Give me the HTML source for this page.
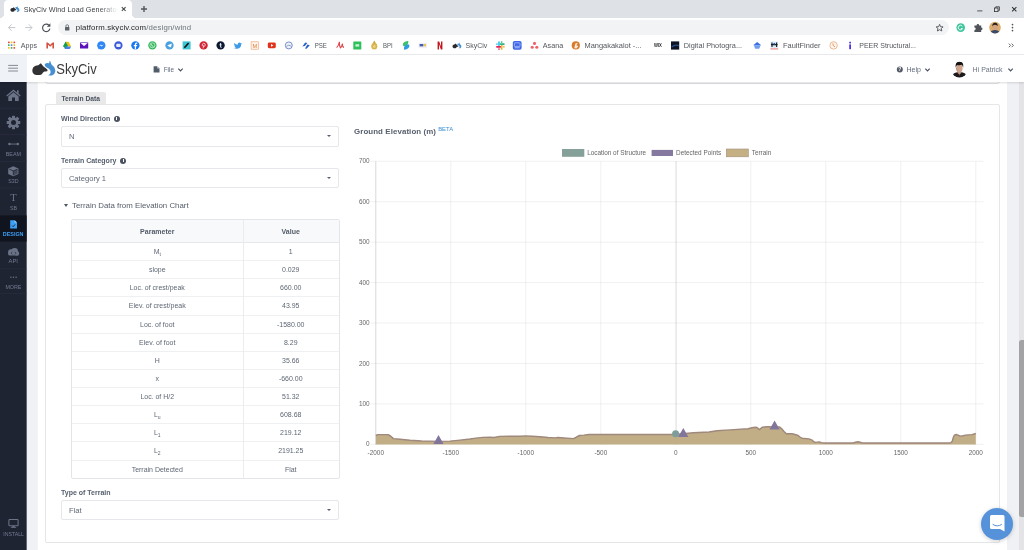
<!DOCTYPE html>
<html><head><meta charset="utf-8">
<style>
*{box-sizing:border-box;margin:0;padding:0}
html,body{width:1024px;height:550px;overflow:hidden;background:#fff;font-family:"Liberation Sans",sans-serif;}
.abs{position:absolute}
#root{will-change:transform;position:relative;width:1024px;height:550px;overflow:hidden;background:#eff1f4}
/* browser chrome */
#tabbar{left:0;top:0;width:1024px;height:17.6px;background:#dee1e6}
#tab{left:4.2px;top:0;width:127.8px;height:17.6px;background:#fff;border-radius:4.2px 4.2px 0 0}#tab:before,#tab:after{content:"";position:absolute;bottom:0;width:4px;height:4px}#tab:before{left:-4px;background:radial-gradient(circle at 0 0,#dee1e6 3.8px,#fff 4.2px)}#tab:after{right:-4px;background:radial-gradient(circle at 100% 0,#dee1e6 3.8px,#fff 4.2px)}
#toolbar{left:0;top:17.6px;width:1024px;height:19.4px;background:#fff}
#url{left:58px;top:20px;width:890.5px;height:15px;background:#f1f3f4;border-radius:8px}
#bm{left:0;top:37px;width:1024px;height:18px;background:#fff;border-bottom:1px solid #e9ebee}
.t{position:absolute;white-space:nowrap;line-height:1}
/* app */
#hdr{left:0;top:55px;width:1024px;height:27px;background:#fff;box-shadow:0 0.5px 2px rgba(0,0,0,.14)}
#ham{left:0;top:55px;width:26.6px;height:27px;background:#eff2f7}
#side{left:0;top:82px;width:26px;box-shadow:1px 0 0 #646873;height:468px;background:#1f2433}

#card{left:38px;top:78px;width:969px;height:480px;background:#fff;box-shadow:-0.4px 0 0 #f9f9fb}
#panel{left:45px;top:104px;width:955px;height:438.6px;background:#fff;border:1px solid #e5e6e8;border-radius:2px}
#ptab{left:56px;top:92px;width:49.5px;height:13px;background:#e9e9e9;border-radius:2px 2px 0 0}
.lbl{font-size:7px;font-weight:bold;color:#57606e}
.sel{position:absolute;left:61px;width:277.6px;height:20px;border:1px solid #e5e7ea;border-radius:2px;background:#fff}
.sel span{position:absolute;left:6.9px;top:6px;font-size:7.6px;line-height:1;color:#5f6775}
.sel i{position:absolute;right:6.6px;top:8.2px;width:0;height:0;border-left:2.2px solid transparent;border-right:2.2px solid transparent;border-top:2.6px solid #566070}
.info{display:inline-block;position:relative;width:6px;height:6px;border-radius:50%;background:#4b5260;vertical-align:-1.1px;margin-left:3.6px}.info:before{content:"";position:absolute;left:2.5px;top:2.6px;width:1px;height:2.2px;background:#fff}.info:after{content:"";position:absolute;left:2.5px;top:1.1px;width:1px;height:0.9px;background:#fff}
#tbl{left:71px;top:219px;width:268.5px;height:260px;border:1px solid #e3e5e8;border-radius:2px;background:#fff;overflow:hidden}
#thead{left:0;top:0;width:268px;height:23px;background:#f8f9fa;border-bottom:1px solid #e6e8ea}
.r{position:absolute;left:0;width:268px;border-bottom:1px solid #eef0f2}
.c1{position:absolute;left:0;width:170.5px;text-align:center;font-size:6.97px;color:#5f6774;line-height:1;top:5.5px}
.c2{position:absolute;left:170.5px;width:96.5px;text-align:center;font-size:6.97px;color:#5f6774;line-height:1;top:5.5px}
#vdiv{left:170.5px;top:0;width:1px;height:260px;background:#eaecee}
sub{font-size:5px;vertical-align:-1.5px;line-height:0}
</style></head><body>
<div id="root">
<div id="tabbar" class="abs"></div>
<div id="tab" class="abs"></div>
<div id="toolbar" class="abs"></div>
<div id="url" class="abs"></div>
<div id="bm" class="abs"></div>
<svg class="abs" style="left:0;top:0" width="1024" height="56" viewBox="0 0 1024 56" font-family="Liberation Sans, sans-serif">
<g transform="translate(10.40,3.90) scale(0.390) translate(-32.3,0)"><path d="M32.3 15 Q32.6 12 35 11 Q36.6 10.2 38.2 10.2 L40.9 8.3 L42.2 10 Q43.6 11.8 45.6 13 L47.7 15.1 L47.1 16.2 Q45.4 16.5 44.4 16.6 Q42.8 17.4 42.2 18.8 Q41.2 19.9 39.6 20.1 H36 Q33.6 19.8 32.8 17.8 Q32.3 16.5 32.3 15 Z" fill="#2a2a2c"/><path d="M44.7 9.2 Q46.4 7.6 49 8.2 Q49.7 7.4 49.6 5.6 Q50.8 6.8 51 8.4 Q51.6 9.8 53.4 11.2 Q55.4 13.2 55.4 16 Q55 19 52.4 20.2 Q50.2 20.9 48.2 20.2 Q50.6 19.2 50.7 17 Q50.6 14.8 48.6 13.4 Q46.4 12.4 45.4 11.4 Q44.6 10.4 44.7 9.2 Z" fill="#3f8fd6"/></g>
<path d="M121.8 7.1 L125.6 10.9 M125.6 7.1 L121.8 10.9" stroke="#44474b" stroke-width="1.05"/><path d="M141 9 H147 M144 6 V12" stroke="#54585d" stroke-width="1.4"/>
<path d="M977.2 10.9 H982.4" stroke="#333" stroke-width="0.8"/><rect x="994.4" y="8" width="3.6" height="3.6" fill="none" stroke="#333" stroke-width="0.8"/><path d="M995.8 8 V6.8 H999.4 V10.4 H998.2" fill="none" stroke="#333" stroke-width="0.8"/><path d="M1012.1 7.1 L1016.4 11.4 M1016.4 7.1 L1012.1 11.4" stroke="#333" stroke-width="1.05"/>
<g fill="none" stroke="#c0c3c7" stroke-width="0.95"><path d="M15.3 27.6 H8.6 M11.7 24.4 L8.5 27.6 L11.7 30.8"/><path d="M25.2 27.6 H31.9 M28.8 24.4 L32 27.6 L28.8 30.8"/></g><path d="M49 25.3 A3.7 3.7 0 1 0 49.9 28.7" fill="none" stroke="#4c5056" stroke-width="1.15"/><path d="M50.4 23.2 V26.8 H46.8 Z" fill="#4c5056"/>
<rect x="65" y="27" width="4.4" height="3.6" rx="0.5" fill="#5f6368"/><path d="M65.9 27.2 V26 A1.3 1.3 0 0 1 68.5 26 V27.2" fill="none" stroke="#5f6368" stroke-width="0.8"/>
<path d="M939.6 24.4 L940.6 26.7 L943.1 26.9 L941.2 28.5 L941.8 31 L939.6 29.7 L937.4 31 L938 28.5 L936.1 26.9 L938.6 26.7 Z" fill="none" stroke="#55595e" stroke-width="0.95" stroke-linejoin="round"/>
<circle cx="960.7" cy="27.6" r="4.3" fill="#3fc59c"/><path d="M962.3 26.2 A2.3 2.3 0 1 0 962.6 28.6 H960.8" fill="none" stroke="#fff" stroke-width="0.9"/><path d="M974.4 25.4 H976.6 A1.3 1.3 0 0 1 979.2 25.4 H981.2 V27.4 A1.3 1.3 0 0 1 981.2 30 V32 H974.4 V30 A1.25 1.25 0 0 0 974.4 27.4 Z" fill="#50545a"/><clipPath id="av2"><circle cx="995" cy="27.6" r="5.8"/></clipPath><g clip-path="url(#av2)"><rect x="989" y="21" width="12" height="13" fill="#d9ad6c"/><ellipse cx="995" cy="33.5" rx="5" ry="3.4" fill="#3a4a68"/><ellipse cx="995" cy="27" rx="2.5" ry="3" fill="#d6a283"/><path d="M992.3 26.4 Q992.2 22.8 995.2 22.8 Q997.9 23 997.7 26.3 Q997 24.6 995 24.7 Q993 24.6 992.3 26.4 Z" fill="#231d1c"/></g><g fill="#50545a"><circle cx="1012.5" cy="24.6" r="0.85"/><circle cx="1012.5" cy="27.6" r="0.85"/><circle cx="1012.5" cy="30.6" r="0.85"/></g>
<rect x="8.00" y="41.60" width="1.6" height="1.6" fill="#ea4335"/><rect x="10.75" y="41.60" width="1.6" height="1.6" fill="#fbbc05"/><rect x="13.50" y="41.60" width="1.6" height="1.6" fill="#ea4335"/><rect x="8.00" y="44.35" width="1.6" height="1.6" fill="#34a853"/><rect x="10.75" y="44.35" width="1.6" height="1.6" fill="#4285f4"/><rect x="13.50" y="44.35" width="1.6" height="1.6" fill="#fbbc05"/><rect x="8.00" y="47.10" width="1.6" height="1.6" fill="#fbbc05"/><rect x="10.75" y="47.10" width="1.6" height="1.6" fill="#34a853"/><rect x="13.50" y="47.10" width="1.6" height="1.6" fill="#ea4335"/>
<path d="M46.4 42.6 H47.8 L50.2 44.8 L52.6 42.6 H54 V48.4 H52.4 V44.8 L50.2 46.8 L48 44.8 V48.4 H46.4 Z" fill="#d5503f"/><path d="M65.6 41.8 H68.6 L71.2 46.4 H68.2 Z" fill="#f4c20d"/><path d="M65.6 41.8 L68.1 46.3 L65.5 49 L63 46.4 Z" fill="#1a9c55" transform="translate(0,-0.2)"/><path d="M64.4 49 L65.9 46.4 H71.2 L69.7 49 Z" fill="#4a7fe3"/><rect x="80" y="42.2" width="8.2" height="6.3" rx="0.6" fill="#5b0fbf"/><path d="M80.4 42.8 L84.1 46 L87.8 42.8" fill="#fff" stroke="#fff" stroke-width="0.3"/><circle cx="101.30" cy="45.40" r="4.15" fill="#2e86f6"/><path d="M99 46.6 L100.8 44.6 L101.8 45.6 L103.6 44.4 L101.8 46.4 L100.8 45.4 Z" fill="#fff"/><path d="M98.6 47.4 L98.4 49.3 L100.4 48.6 Z" fill="#2e86f6"/><circle cx="118.40" cy="45.40" r="4.15" fill="#3a5ad8"/><rect x="116.2" y="43.8" width="4.4" height="3.2" rx="0.9" fill="#e8ecff"/><circle cx="135.40" cy="45.40" r="4.15" fill="#1877f2"/><path d="M136 49.2 V46.2 H137 L137.2 45 H136 V44.3 Q136 43.7 136.7 43.7 H137.3 V42.7 Q135 42.2 134.8 44.2 V45 H133.8 V46.2 H134.8 V49.2 Z" fill="#fff"/><circle cx="152.40" cy="45.40" r="4.15" fill="#35b85c"/><circle cx="152.4" cy="45.3" r="2.5" fill="none" stroke="#fff" stroke-width="0.6"/><path d="M151.3 44.2 Q151.4 46 153.4 46.5" stroke="#fff" stroke-width="0.8" fill="none"/><circle cx="169.50" cy="45.40" r="4.15" fill="#4aa0e0"/><path d="M167.2 45.4 L171.8 43.5 L171 47.6 L169.6 46.6 L168.9 47.4 L168.8 46.2 Z" fill="#fff"/><rect x="182.6" y="41.4" width="8" height="8" fill="#3fc4d4"/><path d="M184.4 47.8 L188.6 43" stroke="#111" stroke-width="1.6"/><circle cx="203.60" cy="45.40" r="4.15" fill="#d32232"/><path d="M203 48.4 L203.8 45.2 M202.3 46.2 Q201.6 43.4 203.8 43.2 Q205.8 43.4 205.2 45.4 Q204.6 46.8 203.6 46.2" stroke="#fff" stroke-width="0.7" fill="none"/><circle cx="220.60" cy="45.40" r="4.15" fill="#0e1a33"/><path d="M220.2 43 V44.4 H219.4 V45.2 H220.2 V47 Q220.3 48 221.6 47.8 V47 Q221.1 47 221.1 46.6 V45.2 H221.7 V44.4 H221.1 V43 Z" fill="#fff"/><path d="M234 43 Q235.6 44.8 237.6 44.8 Q237.4 42.8 239.4 42.6 Q240.2 42.6 240.7 43.2 L241.7 42.9 L241.2 43.8 L241.9 43.7 L241.1 44.6 Q241.2 47.6 238.2 48.6 Q235.8 49.2 233.7 48 Q235.2 48 236 47.2 Q234.8 47 234.5 46 H235.1 Q233.9 45.4 234 44.3 Q234.3 44.5 234.6 44.4 Q233.6 43.8 234 43 Z" fill="#3b9be8"/><rect x="251.1" y="41.8" width="7.4" height="7.4" fill="#fff4ea" stroke="#e8a070" stroke-width="0.6"/><text x="254.8" y="47.8" font-size="5.6" fill="#e07b39" text-anchor="middle">M</text><rect x="267.8" y="42.6" width="8" height="5.6" rx="1.4" fill="#e0321c"/><path d="M271 44 L273.4 45.4 L271 46.8 Z" fill="#fff"/><circle cx="288.8" cy="45.4" r="3.5" fill="#eef2fb" stroke="#4766b0" stroke-width="0.7"/><path d="M286.4 46.4 Q288.6 44 291.4 46.2" stroke="#4766b0" stroke-width="0.6" fill="none"/><path d="M302.4 46.6 L305.2 42.4 L307.4 43 L304.8 46 Z M305 48.6 L307.4 44.6 L309.8 45.2 L306.6 48.8 Z" fill="#2a62c9"/><path d="M336.6 47.6 Q339 45.4 339.4 41.8 Q339.2 46.4 340.6 48 Q342 46.4 342.4 43.6 Q342.2 47 344 47.4" stroke="#e0444a" stroke-width="1.1" fill="none"/><rect x="353.3" y="41.5" width="8" height="8" rx="0.6" fill="#2ec05a"/><rect x="355.4" y="44.2" width="3.8" height="2.4" fill="#c9f2d6"/><ellipse cx="374.3" cy="46.2" rx="3" ry="3.3" fill="#d8b54a"/><path d="M372.6 43.6 L374.3 40.6 L376 43.6 Z" fill="#c9a53c"/><ellipse cx="374.3" cy="46.4" rx="1.2" ry="1.6" fill="#e9d28a"/><path d="M408.2 40.8 Q402.6 41.8 402.8 45.2 Q403.8 47 406 45.8 Q408.8 44.2 408.2 40.8 Z" fill="#3cc26a"/><path d="M404 49.8 Q409.8 48.8 409.4 45.2 Q408.4 43.6 406.2 44.8 Q403.4 46.4 404 49.8 Z" fill="#2f9be0"/><rect x="418.6" y="42.6" width="8.4" height="5.6" fill="#eef0f8"/><rect x="419.6" y="44" width="3.8" height="2.4" fill="#4a59b8"/><rect x="423.6" y="44" width="2.4" height="2.4" fill="#e8c84a"/><path d="M437.6 41.4 H439.2 L441 46.6 V41.4 H442.4 V49.4 H440.9 L439 44.2 V49.4 H437.6 Z" fill="#c4171d"/><g transform="translate(452.50,40.40) scale(0.385) translate(-32.3,0)"><path d="M32.3 15 Q32.6 12 35 11 Q36.6 10.2 38.2 10.2 L40.9 8.3 L42.2 10 Q43.6 11.8 45.6 13 L47.7 15.1 L47.1 16.2 Q45.4 16.5 44.4 16.6 Q42.8 17.4 42.2 18.8 Q41.2 19.9 39.6 20.1 H36 Q33.6 19.8 32.8 17.8 Q32.3 16.5 32.3 15 Z" fill="#2a2a2c"/><path d="M44.7 9.2 Q46.4 7.6 49 8.2 Q49.7 7.4 49.6 5.6 Q50.8 6.8 51 8.4 Q51.6 9.8 53.4 11.2 Q55.4 13.2 55.4 16 Q55 19 52.4 20.2 Q50.2 20.9 48.2 20.2 Q50.6 19.2 50.7 17 Q50.6 14.8 48.6 13.4 Q46.4 12.4 45.4 11.4 Q44.6 10.4 44.7 9.2 Z" fill="#3f8fd6"/></g><g stroke-width="1.7" stroke-linecap="round"><path d="M499 42 V45.3" stroke="#36c5f0"/><path d="M501.7 45.7 V49" stroke="#ecb22e"/><path d="M496.9 46.8 H500.2" stroke="#e01e5a"/><path d="M500.6 44.1 H503.9" stroke="#2eb67d"/><path d="M496.9 44.1 h0.01" stroke="#36c5f0"/><path d="M503.9 46.8 h0.01" stroke="#ecb22e"/><path d="M499 49 h0.01" stroke="#e01e5a"/><path d="M501.7 42 h0.01" stroke="#2eb67d"/></g><rect x="512.8" y="41" width="8.8" height="8.8" rx="1.8" fill="#3f66e6"/><rect x="514.4" y="42.8" width="5.6" height="3.6" rx="0.6" fill="none" stroke="#b9ccff" stroke-width="0.7"/><rect x="514.6" y="47.4" width="5.2" height="0.8" fill="#b9ccff"/><circle cx="534.5" cy="43.4" r="1.55" fill="#f0626a"/><circle cx="532.2" cy="47.2" r="1.55" fill="#f0626a"/><circle cx="536.8" cy="47.2" r="1.55" fill="#f0626a"/><circle cx="575.80" cy="45.40" r="4.10" fill="#d97b2b"/><path d="M574.2 48.2 L575.4 43.6 L577.8 42.8 L576.4 45.4 L578.4 46 L576.6 48.4 Z" fill="#fff" opacity="0.85"/><text x="654" y="46.9" font-size="4.8" font-weight="bold" fill="#2a2a2a" textLength="7.9" lengthAdjust="spacingAndGlyphs">WIX</text><rect x="671" y="41.4" width="8.2" height="8.2" fill="#0d1424"/><path d="M671.6 47 Q675 44.4 678.8 45.6" stroke="#2b4f8a" stroke-width="1.2" fill="none"/><path d="M757.2 42 L761.2 45.3 H753.2 Z" fill="#3b6fe0"/><path d="M753.8 45.3 H760.6 L759.2 48.7 H755.2 Z" fill="#6f9df0"/><rect x="770.6" y="41.6" width="7.4" height="6.2" fill="#d9e6f7"/><path d="M772 42.4 V47 M776.6 42.4 V47 M771 44.6 H777.6" stroke="#1a1a1a" stroke-width="1.1"/><rect x="773.4" y="43" width="1.8" height="1.4" fill="#2b6fd6"/><rect x="770.4" y="48.6" width="7.8" height="0.7" fill="#d33"/><circle cx="833.6" cy="45.4" r="3.7" fill="#fff6ef" stroke="#eaa77a" stroke-width="0.8"/><path d="M832.8 43.4 L833.4 45.8 L835 47" stroke="#e58a4f" stroke-width="0.9" fill="none"/><rect x="849.3" y="44.4" width="1.6" height="4.8" fill="#3a1fe0"/><rect x="849.3" y="41.8" width="1.6" height="1.6" fill="#3a1fe0"/><g font-size="7.2" fill="#53575c"><text x="20.70" y="48" textLength="16.30" lengthAdjust="spacingAndGlyphs">Apps</text><text x="314.70" y="48" textLength="12.20" lengthAdjust="spacingAndGlyphs">PSE</text><text x="383.10" y="48" textLength="9.70" lengthAdjust="spacingAndGlyphs">BPI</text><text x="465.50" y="48" textLength="21.75" lengthAdjust="spacingAndGlyphs">SkyCiv</text><text x="542.75" y="48" textLength="20.50" lengthAdjust="spacingAndGlyphs">Asana</text><text x="584.50" y="48" textLength="57.00" lengthAdjust="spacingAndGlyphs">Mangakakalot -...</text><text x="683.75" y="48" textLength="58.25" lengthAdjust="spacingAndGlyphs">Digital Photogra...</text><text x="783.00" y="48" textLength="37.50" lengthAdjust="spacingAndGlyphs">FaultFinder</text><text x="859.25" y="48" textLength="56.75" lengthAdjust="spacingAndGlyphs">PEER Structural...</text></g>
<path d="M1008.8 43.6 L1010.6 45.4 L1008.8 47.2 M1011.6 43.6 L1013.4 45.4 L1011.6 47.2" stroke="#50545a" stroke-width="0.85" fill="none"/>
</svg>
<div class="t" style="left:23.8px;top:5.9px;font-size:7.2px;color:#3c4043;width:94px;overflow:hidden;letter-spacing:0.08px;-webkit-mask-image:linear-gradient(90deg,#000 80%,transparent 100%)">SkyCiv Wind Load Generator</div>
<div class="t" style="left:75.7px;top:23.9px;font-size:7.8px;letter-spacing:0.14px;color:#26282b">platform.skyciv.com<span style="color:#70757a">/design/wind</span></div>


<div id="side" class="abs"></div>
<svg class="abs" style="left:0;top:82px" width="27" height="468" viewBox="0 0 27 468" font-family="Liberation Sans, sans-serif">
<g stroke="#2b3142" stroke-width="0.6"><path d="M0 26.3H26.6M0 52.7H26.6M0 79.5H26.6M0 106H26.6M0 186.8H26.6M0 211.6H26.6"/></g>
<rect x="0" y="133.4" width="26.6" height="26.2" fill="#10141f"/>
<!-- home -->
<g fill="#6b7386"><path d="M13.5 7.6 L6.3 13.6 L7.1 14.5 L13.5 9.3 L19.9 14.5 L20.7 13.6 L18.6 11.8 V8.3 H17 V10.5 Z"/><path d="M13.5 10.3 L8.3 14.6 V19 H12 V15.6 H15 V19 H18.7 V14.6 Z"/></g>
<!-- gear -->
<g transform="translate(13.5,40.5)" fill="#6b7386"><circle r="4.9"/><g><rect x="-1.5" y="-6.8" width="3" height="13.6" rx="0.6"/><rect x="-1.5" y="-6.8" width="3" height="13.6" rx="0.6" transform="rotate(45)"/><rect x="-1.5" y="-6.8" width="3" height="13.6" rx="0.6" transform="rotate(90)"/><rect x="-1.5" y="-6.8" width="3" height="13.6" rx="0.6" transform="rotate(135)"/></g><circle r="2.5" fill="#1f2433"/></g>
<!-- beam -->
<g fill="#6b7386"><rect x="9" y="61.6" width="9.4" height="0.9"/><circle cx="9.4" cy="62" r="1.2"/><circle cx="17.8" cy="62" r="1.2"/></g>
<!-- cube -->
<g><path d="M13.3 84.2 L18.4 86.4 V92 L13.3 94.3 L8.2 92 V86.4 Z" fill="#6b7386"/><path d="M9.3 87.2 L13.3 88.9 L17.3 87.2 M13.3 88.9 V93.2" stroke="#1f2433" stroke-width="0.8" fill="none"/><path d="M13.3 88.9 L17.6 87.1 V91.6 L13.3 93.5 Z" fill="#1f2433" opacity="0.55"/></g>
<!-- T -->
<text x="13.5" y="119.3" font-family="Liberation Serif, serif" font-size="10.5" fill="#6b7386" text-anchor="middle">T</text>
<!-- design doc -->
<g><path d="M10.2 138.2 H14.6 L17 140.6 V146.6 H10.2 Z" fill="#3b9ff5"/><path d="M14.6 138.2 V140.6 H17 Z" fill="#9fd0fb"/><path d="M12 143.6 L13.1 144.7 L15.1 142.4" stroke="#10141f" stroke-width="0.8" fill="none"/></g>
<!-- cloud api -->
<g fill="#6b7386"><circle cx="11" cy="170.2" r="2.9"/><circle cx="14.6" cy="169.2" r="3.3"/><circle cx="16.8" cy="171.2" r="2.3"/><rect x="8.2" y="170.2" width="10.8" height="3.3" rx="1.6"/><path d="M12.3 170 l-1.2 1.2 l1.2 1.2 M14.9 170 l1.2 1.2 l-1.2 1.2" stroke="#1f2433" stroke-width="0.7" fill="none"/></g>
<!-- dots -->
<g fill="#6b7386"><circle cx="10.9" cy="195.3" r="0.75"/><circle cx="13.5" cy="195.3" r="0.75"/><circle cx="16.1" cy="195.3" r="0.75"/></g>
<!-- monitor -->
<g><rect x="8.9" y="437.5" width="9.2" height="6.2" rx="0.8" fill="none" stroke="#6b7386" stroke-width="1.05"/><rect x="12.3" y="444" width="2.4" height="1.3" fill="#6b7386"/><rect x="10.9" y="445.1" width="5.2" height="0.8" fill="#6b7386"/></g>
<g font-size="5.8" fill="#737b90"><text x="5.80" y="74.30" textLength="15.20" lengthAdjust="spacingAndGlyphs">BEAM</text><text x="8.20" y="100.60" textLength="10.30" lengthAdjust="spacingAndGlyphs">S3D</text><text x="10.00" y="127.50" textLength="7.00" lengthAdjust="spacingAndGlyphs">SB</text><text x="2.80" y="154.00" textLength="20.70" lengthAdjust="spacingAndGlyphs" fill="#3b9ff5" font-weight="bold">DESIGN</text><text x="8.60" y="181.00" textLength="9.40" lengthAdjust="spacingAndGlyphs">API</text><text x="5.40" y="207.40" textLength="16.00" lengthAdjust="spacingAndGlyphs">MORE</text><text x="3.20" y="453.90" textLength="20.80" lengthAdjust="spacingAndGlyphs">INSTALL</text></g>
</svg>

<div id="card" class="abs"></div>
<div class="abs" style="left:45px;top:60px;width:955px;height:23.6px;border:1px solid #e0e1e4;border-radius:0 0 3px 3px;background:#fff"></div>
<div id="ptab" class="abs"></div><div id="panel" class="abs"></div>
<div class="t" style="left:61.4px;top:95.8px;font-size:6.7px;font-weight:bold;color:#4a525f">Terrain Data</div>
<div class="t lbl" style="left:61px;top:114.6px">Wind Direction<span class="info"></span></div>
<div class="sel" style="top:126px;height:20.6px"><span>N</span><i></i></div>
<div class="t lbl" style="left:61px;top:156.6px">Terrain Category<span class="info"></span></div>
<div class="sel" style="top:168px"><span>Category 1</span><i></i></div>
<div class="abs" style="left:63.5px;top:204px;width:0;height:0;border-left:2.2px solid transparent;border-right:2.2px solid transparent;border-top:3px solid #4b5563"></div>
<div class="t" style="left:72px;top:201.5px;font-size:7.86px;color:#555c68">Terrain Data from Elevation Chart</div>
<div id="tbl" class="abs"><div id="thead" class="abs"></div><div class="c1" style="top:8px;font-size:7.03px;font-weight:bold;color:#535b69">Parameter</div><div class="c2" style="top:8px;font-size:7.03px;font-weight:bold;color:#535b69">Value</div><div class="r" style="top:23px;height:18px"><div class="c1">M<sub>t</sub></div><div class="c2">1</div></div><div class="r" style="top:41px;height:18px"><div class="c1">slope</div><div class="c2">0.029</div></div><div class="r" style="top:59px;height:18px"><div class="c1">Loc. of crest/peak</div><div class="c2">660.00</div></div><div class="r" style="top:77px;height:19px"><div class="c1">Elev. of crest/peak</div><div class="c2">43.95</div></div><div class="r" style="top:96px;height:18px"><div class="c1">Loc. of foot</div><div class="c2">-1580.00</div></div><div class="r" style="top:114px;height:18px"><div class="c1">Elev. of foot</div><div class="c2">8.29</div></div><div class="r" style="top:132px;height:18px"><div class="c1">H</div><div class="c2">35.66</div></div><div class="r" style="top:150px;height:18px"><div class="c1">x</div><div class="c2">-660.00</div></div><div class="r" style="top:168px;height:18px"><div class="c1">Loc. of H/2</div><div class="c2">51.32</div></div><div class="r" style="top:186px;height:18px"><div class="c1">L<sub>u</sub></div><div class="c2">608.68</div></div><div class="r" style="top:204px;height:18px"><div class="c1">L<sub>1</sub></div><div class="c2">219.12</div></div><div class="r" style="top:222px;height:19px"><div class="c1">L<sub>2</sub></div><div class="c2">2191.25</div></div><div class="r" style="top:241px;height:18px"><div class="c1">Terrain Detected</div><div class="c2">Flat</div></div><div id="vdiv" class="abs"></div></div>
<div class="t lbl" style="left:61px;top:488.5px">Type of Terrain</div>
<div class="sel" style="top:500px"><span>Flat</span><i></i></div>
<div class="abs" style="left:1019px;top:82px;width:5px;height:468px;background:#e4e4e6"></div>
<div class="abs" style="left:1019px;top:340px;width:5px;height:177px;background:#a3a3a5;border-radius:2.5px 0 0 2.5px"></div>
<div class="abs" style="left:981px;top:507.5px;width:32px;height:32px;border-radius:50%;background:#5592da;box-shadow:0 1px 4px rgba(0,0,0,.2)"></div>
<svg class="abs" style="left:989px;top:514px" width="17" height="19" viewBox="0 0 17 19"><path d="M2.5 1 H14 Q15.5 1 15.5 2.5 V17.5 L11 15 H2.5 Q1 15 1 13.5 V2.5 Q1 1 2.5 1 Z" fill="#fff"/><path d="M4 10.5 Q8.2 13.5 12.5 10.5" stroke="#5592da" stroke-width="1" fill="none" stroke-linecap="round"/></svg>
<svg class="abs" style="left:0;top:0" width="1024" height="550" viewBox="0 0 1024 550" font-family="Liberation Sans, sans-serif">
<path d="M370.6 444.30 H983.5" stroke="#000" stroke-opacity="0.11" stroke-width="0.55"/><path d="M370.6 403.87 H983.5" stroke="#000" stroke-opacity="0.11" stroke-width="0.55"/><path d="M370.6 363.44 H983.5" stroke="#000" stroke-opacity="0.11" stroke-width="0.55"/><path d="M370.6 323.01 H983.5" stroke="#000" stroke-opacity="0.11" stroke-width="0.55"/><path d="M370.6 282.58 H983.5" stroke="#000" stroke-opacity="0.11" stroke-width="0.55"/><path d="M370.6 242.15 H983.5" stroke="#000" stroke-opacity="0.11" stroke-width="0.55"/><path d="M370.6 201.72 H983.5" stroke="#000" stroke-opacity="0.11" stroke-width="0.55"/><path d="M370.6 161.29 H983.5" stroke="#000" stroke-opacity="0.11" stroke-width="0.55"/><path d="M375.80 161.3 V444.80" stroke="#000" stroke-opacity="0.11" stroke-width="0.55"/><path d="M450.80 161.3 V444.80" stroke="#000" stroke-opacity="0.11" stroke-width="0.55"/><path d="M525.80 161.3 V444.80" stroke="#000" stroke-opacity="0.11" stroke-width="0.55"/><path d="M600.80 161.3 V444.80" stroke="#000" stroke-opacity="0.11" stroke-width="0.55"/><path d="M676.05 161.3 V444.80" stroke="#000" stroke-opacity="0.125" stroke-width="1.15"/><path d="M750.80 161.3 V444.80" stroke="#000" stroke-opacity="0.11" stroke-width="0.55"/><path d="M825.80 161.3 V444.80" stroke="#000" stroke-opacity="0.11" stroke-width="0.55"/><path d="M900.80 161.3 V444.80" stroke="#000" stroke-opacity="0.11" stroke-width="0.55"/><path d="M975.80 161.3 V444.80" stroke="#000" stroke-opacity="0.11" stroke-width="0.55"/><path d="M375.80 161.3 V444.80" stroke="#000" stroke-opacity="0.18" stroke-width="0.55"/>
<path d="M375.8 435.5 L377.8 434.6 L388.0 434.6 L390.5 436.0 L393.4 438.6 L400.0 439.3 L410.0 440.3 L421.6 441.0 L438.0 441.4 L450.0 441.1 L460.0 440.1 L470.0 439.0 L476.0 438.1 L482.5 437.4 L490.0 437.3 L494.0 437.5 L499.7 436.4 L510.0 436.3 L520.0 436.3 L525.5 435.9 L532.0 436.3 L540.0 436.8 L548.0 437.5 L555.0 437.9 L558.0 437.5 L564.0 438.0 L570.0 438.4 L573.5 438.6 L576.0 437.3 L579.4 435.5 L584.0 435.1 L588.8 434.5 L675.5 434.5 L683.0 433.8 L693.4 432.7 L709.0 432.0 L716.9 430.7 L730.0 429.9 L748.1 428.8 L752.0 427.7 L755.2 427.2 L757.0 427.5 L759.4 429.6 L762.2 427.3 L766.9 426.8 L779.4 426.9 L781.7 428.8 L784.0 431.5 L786.4 433.8 L791.9 433.8 L795.0 434.5 L798.1 435.5 L800.0 437.0 L802.0 438.2 L809.0 438.9 L812.2 440.2 L813.8 441.7 L815.3 442.4 L819.2 441.9 L821.5 442.6 L823.9 443.0 L853.1 443.0 L855.5 442.2 L857.8 441.7 L860.0 442.3 L862.5 443.0 L949.2 443.0 L951.0 442.6 L952.3 441.3 L953.3 437.5 L954.4 435.1 L956.2 434.5 L958.0 435.1 L960.2 436.1 L963.0 435.7 L965.6 435.1 L971.9 434.6 L975.8 433.5 L975.8 444.4 L375.8 444.4 Z" fill="#c1ae86"/><path d="M375.8 435.5 L377.8 434.6 L388.0 434.6 L390.5 436.0 L393.4 438.6 L400.0 439.3 L410.0 440.3 L421.6 441.0 L438.0 441.4 L450.0 441.1 L460.0 440.1 L470.0 439.0 L476.0 438.1 L482.5 437.4 L490.0 437.3 L494.0 437.5 L499.7 436.4 L510.0 436.3 L520.0 436.3 L525.5 435.9 L532.0 436.3 L540.0 436.8 L548.0 437.5 L555.0 437.9 L558.0 437.5 L564.0 438.0 L570.0 438.4 L573.5 438.6 L576.0 437.3 L579.4 435.5 L584.0 435.1 L588.8 434.5 L675.5 434.5 L683.0 433.8 L693.4 432.7 L709.0 432.0 L716.9 430.7 L730.0 429.9 L748.1 428.8 L752.0 427.7 L755.2 427.2 L757.0 427.5 L759.4 429.6 L762.2 427.3 L766.9 426.8 L779.4 426.9 L781.7 428.8 L784.0 431.5 L786.4 433.8 L791.9 433.8 L795.0 434.5 L798.1 435.5 L800.0 437.0 L802.0 438.2 L809.0 438.9 L812.2 440.2 L813.8 441.7 L815.3 442.4 L819.2 441.9 L821.5 442.6 L823.9 443.0 L853.1 443.0 L855.5 442.2 L857.8 441.7 L860.0 442.3 L862.5 443.0 L949.2 443.0 L951.0 442.6 L952.3 441.3 L953.3 437.5 L954.4 435.1 L956.2 434.5 L958.0 435.1 L960.2 436.1 L963.0 435.7 L965.6 435.1 L971.9 434.6 L975.8 433.5" fill="none" stroke="#9f887c" stroke-width="1.45" stroke-linejoin="round"/>
<circle cx="675.6" cy="433.8" r="3.5" fill="#7e9d99"/><path d="M433.4 443.9 L443.6 443.9 L438.5 435.0 Z" fill="#81759b"/><path d="M678.2 436.9 L688.4 436.9 L683.3 428.0 Z" fill="#81759b"/><path d="M769.5 429.5 L779.7 429.5 L774.6 420.6 Z" fill="#81759b"/>
<g font-size="6.4" fill="#666"><text x="369.6" y="446.40" text-anchor="end">0</text><text x="369.6" y="405.97" text-anchor="end">100</text><text x="369.6" y="365.54" text-anchor="end">200</text><text x="369.6" y="325.11" text-anchor="end">300</text><text x="369.6" y="284.68" text-anchor="end">400</text><text x="369.6" y="244.25" text-anchor="end">500</text><text x="369.6" y="203.82" text-anchor="end">600</text><text x="369.6" y="163.39" text-anchor="end">700</text><text x="375.80" y="455" text-anchor="middle">-2000</text><text x="450.80" y="455" text-anchor="middle">-1500</text><text x="525.80" y="455" text-anchor="middle">-1000</text><text x="600.80" y="455" text-anchor="middle">-500</text><text x="675.80" y="455" text-anchor="middle">0</text><text x="750.80" y="455" text-anchor="middle">500</text><text x="825.80" y="455" text-anchor="middle">1000</text><text x="900.80" y="455" text-anchor="middle">1500</text><text x="975.80" y="455" text-anchor="middle">2000</text></g>
<rect x="562" y="149" width="22.3" height="7.8" fill="#859f99"/><rect x="651.6" y="149.9" width="21.4" height="6.1" fill="#85799f"/><rect x="726.3" y="149" width="22" height="7.8" fill="#c4b083" stroke="#a58f7a" stroke-width="0.6"/><g font-size="6.4" fill="#666"><text x="587.2" y="155.2">Location of Structure</text><text x="676.1" y="155.2">Detected Points</text><text x="751.7" y="155.2">Terrain</text></g>
</svg>
<div class="t" style="left:354px;top:127.6px;font-size:7.9px;font-weight:bold;letter-spacing:0.09px;color:#57606e">Ground Elevation (m)</div><div class="t" style="left:438.2px;top:127.2px;font-size:5.9px;color:#3b8fd6">BETA</div>

<div id="hdr" class="abs"></div>
<div id="ham" class="abs"></div>
<svg class="abs" style="left:0;top:55px" width="1024" height="27" viewBox="0 0 1024 27" font-family="Liberation Sans, sans-serif">
<g stroke="#7a7f88" stroke-width="0.9"><path d="M8.2 10.4H18M8.2 13.2H18M8.2 16H18"/></g>
<!-- logo -->
<path d="M32.3 15 Q32.6 12 35 11 Q36.6 10.2 38.2 10.2 L40.9 8.3 L42.2 10 Q43.6 11.8 45.6 13 L47.7 15.1 L47.1 16.2 Q45.4 16.5 44.4 16.6 Q42.8 17.4 42.2 18.8 Q41.2 19.9 39.6 20.1 H36 Q33.6 19.8 32.8 17.8 Q32.3 16.5 32.3 15 Z" fill="#323234"/>
<path d="M44.7 9.2 Q46.4 7.6 49 8.2 Q49.7 7.4 49.6 5.6 Q50.8 6.8 51 8.4 Q51.6 9.8 53.4 11.2 Q55.4 13.2 55.4 16 Q55 19 52.4 20.2 Q50.2 20.9 48.2 20.2 Q50.6 19.2 50.7 17 Q50.6 14.8 48.6 13.4 Q46.4 12.4 45.4 11.4 Q44.6 10.4 44.7 9.2 Z" fill="#4690d2"/>
<text x="56.3" y="18.8" font-size="14" fill="#3a3a3c" textLength="40.4" lengthAdjust="spacingAndGlyphs">SkyCiv</text>
<!-- file -->
<path d="M153.6 11.2 H157.3 L159.5 13.4 V17.6 H153.6 Z" fill="#505c69"/><path d="M157.5 11.2 V13.2 H159.5" fill="none" stroke="#fff" stroke-width="0.5"/>
<text x="163.7" y="16.9" font-size="6.8" fill="#606a7a" textLength="10.3" lengthAdjust="spacingAndGlyphs">File</text>
<path d="M178.3 13.6 L180.5 15.8 L182.7 13.6" stroke="#4a5160" stroke-width="1.2" fill="none"/>
<!-- help -->
<circle cx="899.8" cy="14.5" r="3" fill="#555c68"/><text x="899.8" y="16.4" font-size="5" font-weight="bold" fill="#fff" text-anchor="middle">?</text>
<text x="906.5" y="17" font-size="7" fill="#606a7a">Help</text>
<path d="M925.3 13.6 L927.5 15.8 L929.7 13.6" stroke="#4a5160" stroke-width="1.2" fill="none"/>
<!-- avatar -->
<g><clipPath id="av"><circle cx="959.4" cy="14.6" r="7.9"/></clipPath><g clip-path="url(#av)"><rect x="951" y="6" width="17" height="17" fill="#fff"/><path d="M951.6 23 Q952 18.6 956 17.6 L959.4 17 L962.8 17.6 Q966.8 18.6 967.2 23 Z" fill="#1b1a1d"/><path d="M958.2 17.2 L959.4 21 L960.6 17.2 Z" fill="#9a4040"/><path d="M957.6 15.5 H961.2 V18 L959.4 19.4 L957.6 18 Z" fill="#c39a84"/><ellipse cx="959.4" cy="13.2" rx="3.2" ry="4.1" fill="#cfa58e"/><path d="M956.2 13.4 Q956.6 15.8 958 17 Q957 14.6 956.9 12.4 Z" fill="#a87f6c"/><path d="M955.6 13 Q955 6.4 959.6 6.3 Q963.9 6.5 963.2 12.8 Q962.6 10.4 961.6 9.8 Q959.6 10.6 957.2 10 Q956 10.8 955.6 13 Z" fill="#161314"/></g></g>
<text x="972.6" y="17" font-size="7" fill="#6a7484">Hi Patrick</text>
<path d="M1008.4 13.6 L1010.6 15.8 L1012.8 13.6" stroke="#4a5160" stroke-width="1.2" fill="none"/>
</svg>

</div>
</body></html>
